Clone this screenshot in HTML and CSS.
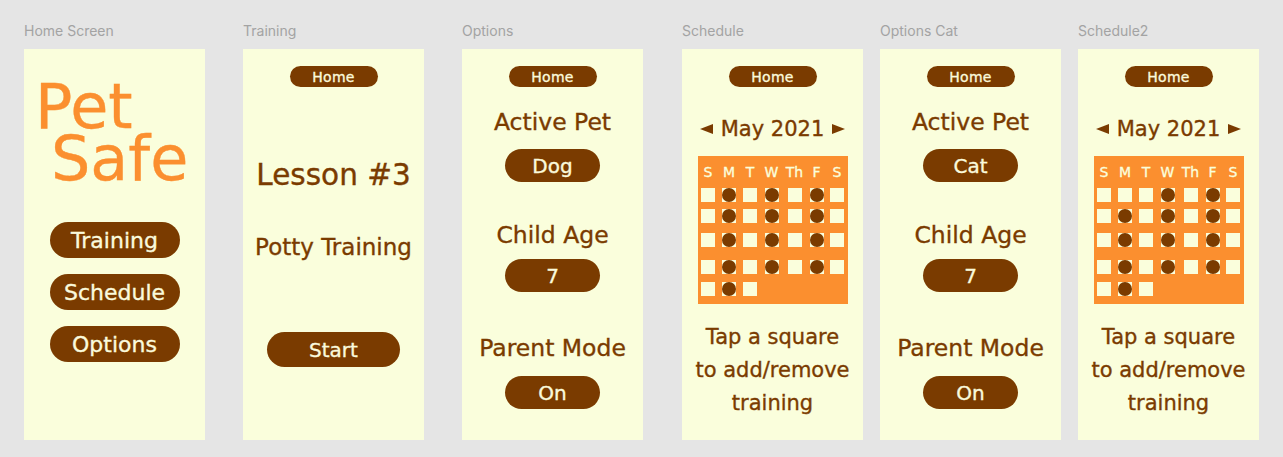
FILE: index.html
```html
<!DOCTYPE html>
<html>
<head>
<meta charset="utf-8">
<link rel="stylesheet" href="styles.css">
</head>
<body>
<div class="board">
  <div class="group wide">
    <div class="col">
      <div class="label">Home Screen</div>
      <div class="frame home-frame">
        <div class="logo">Pet<br><span class="l2">Safe</span></div>
        <div class="btn big first">Training</div>
        <div class="btn big">Schedule</div>
        <div class="btn big">Options</div>
      </div>
    </div>
    <div class="col">
      <div class="label">Training</div>
      <div class="frame">
        <div class="home">Home</div>
        <div class="lesson">Lesson #3</div>
        <div class="subtitle">Potty Training</div>
        <div class="btn start">Start</div>
      </div>
    </div>
    <div class="col">
      <div class="label">Options</div>
      <div class="frame">
        <div class="home">Home</div>
        <div class="heading h1">Active Pet</div>
        <div class="btn opt o1">Dog</div>
        <div class="heading h2">Child Age</div>
        <div class="btn opt o2">7</div>
        <div class="heading h3">Parent Mode</div>
        <div class="btn opt o3">On</div>
      </div>
    </div>
    <div class="col sched-col">
      <div class="label">Schedule</div>
      <div class="frame">
        <div class="home">Home</div>
        <div class="month">
          <svg width="13" height="10" viewBox="0 0 13 10"><polygon points="0,5 13,0 13,10" fill="#7a3b00"/></svg>
          <span>May 2021</span>
          <svg width="13" height="10" viewBox="0 0 13 10"><polygon points="13,5 0,0 0,10" fill="#7a3b00"/></svg>
        </div>
        <div class="cal">
          <div class="dh">S</div><div class="dh">M</div><div class="dh">T</div><div class="dh">W</div><div class="dh">Th</div><div class="dh">F</div><div class="dh">S</div>
          <div class="sq"></div><div class="sq"><div class="dot"></div></div><div class="sq"></div><div class="sq"><div class="dot"></div></div><div class="sq"></div><div class="sq"><div class="dot"></div></div><div class="sq"></div>
          <div class="sq"></div><div class="sq"><div class="dot"></div></div><div class="sq"></div><div class="sq"><div class="dot"></div></div><div class="sq"></div><div class="sq"><div class="dot"></div></div><div class="sq"></div>
          <div class="sq"></div><div class="sq"><div class="dot"></div></div><div class="sq"></div><div class="sq"><div class="dot"></div></div><div class="sq"></div><div class="sq"><div class="dot"></div></div><div class="sq"></div>
          <div class="sq"></div><div class="sq"><div class="dot"></div></div><div class="sq"></div><div class="sq"><div class="dot"></div></div><div class="sq"></div><div class="sq"><div class="dot"></div></div><div class="sq"></div>
          <div class="sq"></div><div class="sq"><div class="dot"></div></div><div class="sq"></div>
        </div>
        <div class="note">Tap a square<br>to add/remove<br>training</div>
      </div>
    </div>
  </div>
  <div class="group narrow">
    <div class="col">
      <div class="label">Options Cat</div>
      <div class="frame">
        <div class="home">Home</div>
        <div class="heading h1">Active Pet</div>
        <div class="btn opt o1">Cat</div>
        <div class="heading h2">Child Age</div>
        <div class="btn opt o2">7</div>
        <div class="heading h3">Parent Mode</div>
        <div class="btn opt o3">On</div>
      </div>
    </div>
    <div class="col">
      <div class="label">Schedule2</div>
      <div class="frame">
        <div class="home">Home</div>
        <div class="month">
          <svg width="13" height="10" viewBox="0 0 13 10"><polygon points="0,5 13,0 13,10" fill="#7a3b00"/></svg>
          <span>May 2021</span>
          <svg width="13" height="10" viewBox="0 0 13 10"><polygon points="13,5 0,0 0,10" fill="#7a3b00"/></svg>
        </div>
        <div class="cal">
          <div class="dh">S</div><div class="dh">M</div><div class="dh">T</div><div class="dh">W</div><div class="dh">Th</div><div class="dh">F</div><div class="dh">S</div>
          <div class="sq"></div><div class="sq"></div><div class="sq"></div><div class="sq"><div class="dot"></div></div><div class="sq"></div><div class="sq"><div class="dot"></div></div><div class="sq"></div>
          <div class="sq"></div><div class="sq"><div class="dot"></div></div><div class="sq"></div><div class="sq"><div class="dot"></div></div><div class="sq"></div><div class="sq"><div class="dot"></div></div><div class="sq"></div>
          <div class="sq"></div><div class="sq"><div class="dot"></div></div><div class="sq"></div><div class="sq"><div class="dot"></div></div><div class="sq"></div><div class="sq"><div class="dot"></div></div><div class="sq"></div>
          <div class="sq"></div><div class="sq"><div class="dot"></div></div><div class="sq"></div><div class="sq"><div class="dot"></div></div><div class="sq"></div><div class="sq"><div class="dot"></div></div><div class="sq"></div>
          <div class="sq"></div><div class="sq"><div class="dot"></div></div><div class="sq"></div>
        </div>
        <div class="note">Tap a square<br>to add/remove<br>training</div>
      </div>
    </div>
  </div>
</div>
</body>
</html>
```

FILE: styles.css
```css
* { box-sizing: border-box; }
html, body { margin: 0; padding: 0; }
body {
  background: #e5e5e5;
  font-family: "DejaVu Sans", "Noto Sans", sans-serif;
  color: #7a3b00;
  width: 1283px;
  height: 457px;
  overflow: hidden;
}
.board {
  display: flex;
  gap: 17px;
  padding: 22px 0 0 24px;
}
.group { display: flex; }
.group.wide { gap: 38px; }
.group.narrow { gap: 17px; }
.sched-col { margin-left: 1px; }
.col { display: flex; flex-direction: column; }
.label {
  font-family: Inter, "Liberation Sans", sans-serif;
  font-size: 14px;
  line-height: 17px;
  color: #a3a3a3;
  margin-bottom: 10px;
}
.frame {
  width: 181px;
  height: 391px;
  background: #fafedc;
  display: flex;
  flex-direction: column;
  align-items: center;
  padding-top: 17px;
  -webkit-text-stroke: 0.35px currentColor;
}
.btn {
  background: #7a3b00;
  color: #fafadc;
  border-radius: 999px;
  display: flex;
  align-items: center;
  justify-content: center;
}
.home {
  width: 88px;
  height: 21px;
  border-radius: 999px;
  background: #7a3b00;
  color: #fafadc;
  font-size: 14px;
  display: flex;
  align-items: center;
  justify-content: center;
  letter-spacing: 0.3px;
}
/* Home screen */
.home-frame { align-items: stretch; padding-top: 32px; }
.logo {
  color: #fb8f2f;
  font-size: 62px;
  line-height: 52px;
  padding-left: 11px;
}
.logo .l2 { margin-left: 16px; }
.btn.big {
  width: 130px;
  height: 36px;
  font-size: 22px;
  align-self: center;
  margin-top: 16px;
}
.btn.big.first { margin-top: 37px; }
/* Training */
.lesson {
  font-size: 29.5px;
  line-height: 34px;
  margin-top: 71px;
}
.subtitle {
  font-size: 23px;
  line-height: 30px;
  margin-top: 40px;
}
.btn.start {
  width: 133px;
  height: 35px;
  font-size: 20px;
  margin-top: 70px;
}
/* Options */
.heading {
  font-size: 23.5px;
  line-height: 30px;
}
.heading.h1 { margin-top: 20px; }
.heading.h2 { margin-top: 38px; }
.heading.h3 { margin-top: 41px; }
.btn.opt {
  width: 95px;
  height: 33px;
  font-size: 20px;
}
.btn.o1 { margin-top: 12px; }
.btn.o2 { margin-top: 9px; }
.btn.o3 { margin-top: 13px; }
/* Schedule */
.month {
  display: flex;
  align-items: center;
  gap: 8px;
  height: 22px;
  margin-top: 31px;
  font-size: 21px;
}
.cal {
  margin-top: 16px;
  width: 150px;
  height: 148px;
  background: #fb8f2f;
  display: grid;
  grid-template-columns: 21px 21px 21px 22px 24px 20px 21px;
  grid-template-rows: 32px 21px 24px 27px 22px 22px;
  justify-items: center;
  align-items: start;
}
.dh {
  color: #fafedc;
  font-size: 14px;
  align-self: center;
  line-height: 14px;
}
.sq {
  width: 14px;
  height: 14px;
  background: #fafedc;
}
.dot {
  width: 14px;
  height: 14px;
  border-radius: 50%;
  background: #7a3b00;
}
.note {
  text-align: center;
  font-size: 21px;
  line-height: 33px;
  margin-top: 17px;
}
```
